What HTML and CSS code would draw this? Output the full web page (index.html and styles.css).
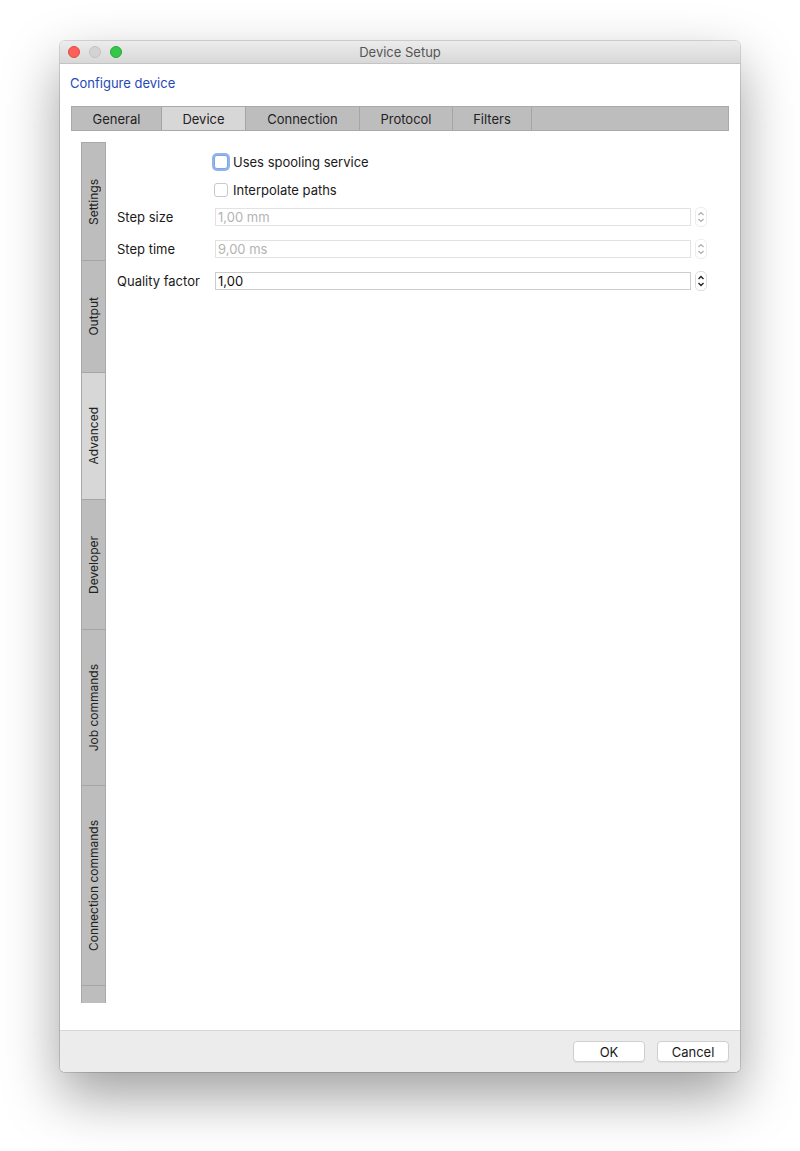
FILE: index.html
```html
<!DOCTYPE html>
<html lang="en">
  <head>
    <meta charset="UTF-8" />
    <title>Device Setup</title>
    <link rel="stylesheet" href="styles.css">
  </head>
  <body>
    <div class="window">
      <!-- Title bar -->
      <div class="titlebar">
        <div class="lights">
          <span class="light close"></span>
          <span class="light min"></span>
          <span class="light zoom"></span>
        </div>
        <div class="title">Device Setup</div>
      </div>

      <div class="content">
        <div class="heading">Configure device</div>

        <!-- Top tabs -->
        <div class="tabbar">
          <div class="tab tab-general">General</div>
          <div class="tab tab-device active">Device</div>
          <div class="tab tab-connection">Connection</div>
          <div class="tab tab-protocol">Protocol</div>
          <div class="tab tab-filters">Filters</div>
        </div>

        <div class="pane">
          <!-- Side tabs -->
          <div class="vtabs">
            <div class="vtab h-settings"><span>Settings</span></div>
            <div class="vtab h-output"><span>Output</span></div>
            <div class="vtab h-advanced active"><span>Advanced</span></div>
            <div class="vtab h-developer"><span>Developer</span></div>
            <div class="vtab h-job"><span>Job commands</span></div>
            <div class="vtab h-conn"><span>Connection commands</span></div>
            <div class="vtab h-rest"></div>
          </div>

          <!-- Form -->
          <div class="form">
            <div class="checks">
              <div class="row check-row">
                <span class="checkbox focused"></span>
                <span class="check-label">Uses spooling service</span>
              </div>
              <div class="row check-row">
                <span class="checkbox"></span>
                <span class="check-label">Interpolate paths</span>
              </div>
            </div>

            <div class="fields">
              <div class="row field-row">
                <label>Step size</label>
                <div class="input disabled">1,00 mm</div>
                <div class="spinner disabled">
                  <svg width="8" height="16" viewBox="0 0 8 16"><path d="M1.5 6 L4 3.5 L6.5 6 M1.5 10 L4 12.5 L6.5 10" fill="none" stroke="currentColor" stroke-width="1.1"/></svg>
                </div>
              </div>
              <div class="row field-row">
                <label>Step time</label>
                <div class="input disabled">9,00 ms</div>
                <div class="spinner disabled">
                  <svg width="8" height="16" viewBox="0 0 8 16"><path d="M1.5 6 L4 3.5 L6.5 6 M1.5 10 L4 12.5 L6.5 10" fill="none" stroke="currentColor" stroke-width="1.1"/></svg>
                </div>
              </div>
              <div class="row field-row">
                <label>Quality factor</label>
                <div class="input">1,00</div>
                <div class="spinner">
                  <svg width="8" height="16" viewBox="0 0 8 16"><path d="M1.5 6 L4 3.5 L6.5 6 M1.5 10 L4 12.5 L6.5 10" fill="none" stroke="currentColor" stroke-width="1.4"/></svg>
                </div>
              </div>
            </div>
          </div>
        </div>
      </div>

      <!-- Buttons -->
      <div class="footer">
        <button class="btn">OK</button>
        <button class="btn">Cancel</button>
      </div>
    </div>
  </body>
</html>
```

FILE: styles.css
```css
/* General */
html {
  background-color: #ffffff;
}

body {
  margin: 0;
  padding: 41px 60px 0;
  min-height: 1151px;
  box-sizing: border-box;
  background-color: #ffffff;
  font-family: Inter, "Liberation Sans", Arial, sans-serif;
  font-size: 13px;
  color: #1a1a1a;
}

/* Window frame */
.window {
  width: 680px;
  height: 1031px;
  display: flex;
  flex-direction: column;
  background-color: #fff;
  border-radius: 5px;
  box-shadow: 0 0 0 1px rgba(0, 0, 0, 0.14), 0 24px 55px rgba(0, 0, 0, 0.38);
  overflow: hidden;
}

.titlebar {
  height: 22px;
  display: flex;
  align-items: center;
  justify-content: center;
  position: relative;
  background: linear-gradient(#ececec, #d8d8d8);
  border-bottom: 1px solid #c4c4c4;
}

.lights {
  position: absolute;
  left: 8px;
  top: 5px;
  display: flex;
  gap: 9px;
}

.light {
  width: 12px;
  height: 12px;
  border-radius: 50%;
  box-sizing: border-box;
}

.light.close {
  background-color: #fc605b;
  border: 1px solid #de4a44;
}

.light.min {
  background-color: #d3d3d3;
  border: 1px solid #c2c2c2;
}

.light.zoom {
  background-color: #34c748;
  border: 1px solid #27aa35;
}

.title {
  color: #555;
  font-size: 13px;
}

/* Content */
.content {
  flex: 1;
  padding: 11px 11px 0;
}

.heading {
  color: #2549b8;
  line-height: 16px;
  margin-left: -1px;
}

/* Top tab bar */
.tabbar {
  margin-top: 15px;
  height: 23px;
  display: flex;
  background-color: #bdbdbd;
  border: 1px solid #a9a9a9;
}

.tab {
  box-sizing: border-box;
  border-right: 1px solid #a5a5a5;
  text-align: center;
  line-height: 24px;
  color: #222;
}

.tab.active {
  background-color: #d7d7d7;
}

.tab-general { width: 90px; }
.tab-device { width: 84px; }
.tab-connection { width: 114px; }
.tab-protocol { width: 93px; }
.tab-filters { width: 79px; }

/* Pane with side tabs */
.pane {
  display: flex;
  padding: 11px 0 0 10px;
}

.vtabs {
  width: 23px;
  display: flex;
  flex-direction: column;
  background-color: #bdbdbd;
  border: 1px solid #a9a9a9;
  border-bottom: none;
}

.vtab {
  box-sizing: border-box;
  border-bottom: 1px solid #a5a5a5;
  display: flex;
  align-items: center;
  justify-content: center;
}

.vtab span {
  writing-mode: vertical-rl;
  transform: rotate(180deg);
  font-size: 12px;
  color: #222;
  white-space: nowrap;
}

.vtab.active {
  background-color: #d7d7d7;
}

.h-settings { height: 118px; }
.h-output { height: 112px; }
.h-advanced { height: 127px; }
.h-developer { height: 130px; }
.h-job { height: 156px; }
.h-conn { height: 200px; }
.h-rest { height: 17px; border-bottom: none; }

/* Form */
.form {
  flex: 1;
  margin: 0 22px 0 11px;
  padding-top: 10px;
  display: flex;
  flex-direction: column;
  gap: 7px;
}

.checks {
  display: flex;
  flex-direction: column;
  gap: 8px;
}

.fields {
  display: flex;
  flex-direction: column;
  gap: 12px;
}

.row {
  height: 20px;
  display: flex;
  align-items: center;
}

.check-row {
  padding-left: 97px;
}

.checkbox {
  width: 14px;
  height: 14px;
  box-sizing: border-box;
  border: 1px solid #c9c9c9;
  border-radius: 3px;
  background-color: #fff;
  margin-right: 5px;
}

.checkbox.focused {
  border-color: #7da6e8;
  box-shadow: 0 0 0 2px rgba(120, 160, 235, 0.8);
}

.field-row label {
  width: 98px;
}

.input {
  flex: 1;
  height: 18px;
  box-sizing: border-box;
  border: 1px solid #cdcdcd;
  padding-left: 2px;
  line-height: 16px;
  color: #111;
}

.input.disabled {
  border-color: #e2e2e2;
  color: #b3b3b3;
}

.spinner {
  width: 12px;
  height: 20px;
  box-sizing: border-box;
  margin-left: 4px;
  border: 1px solid #dcdcdc;
  border-radius: 5px;
  display: flex;
  align-items: center;
  justify-content: center;
  color: #222;
}

.spinner.disabled {
  border-color: #ececec;
  color: #a9a9a9;
}

/* Footer */
.footer {
  height: 42px;
  box-sizing: border-box;
  border-top: 1px solid #d6d6d6;
  background-color: #ececec;
  display: flex;
  justify-content: flex-end;
  align-items: flex-start;
  gap: 12px;
  padding: 10px 11px 0;
}

.btn {
  width: 72px;
  height: 21px;
  font-family: Inter, "Liberation Sans", Arial, sans-serif;
  font-size: 13px;
  color: #1a1a1a;
  background-color: #fff;
  border: 1px solid #cfcfcf;
  border-radius: 4px;
  box-shadow: 0 1px 1px rgba(0, 0, 0, 0.06);
  padding: 0;
}
```
